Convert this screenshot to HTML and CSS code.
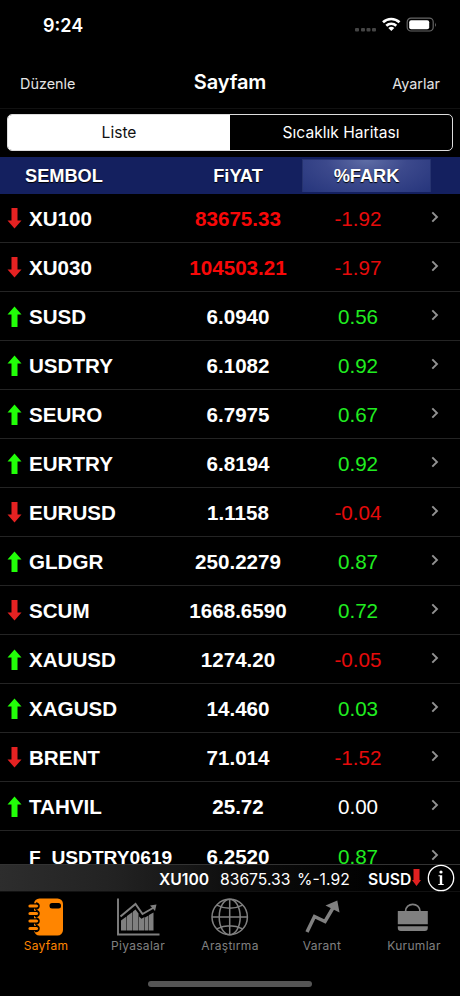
FILE: index.html
```html
<!DOCTYPE html>
<html lang="tr">
<head>
<meta charset="utf-8">
<title>Sayfam</title>
<link rel="stylesheet" href="styles.css">
</head>
<body>
<svg class="defs" aria-hidden="true">
  <symbol id="arrow" viewBox="0 0 14 21"><path d="M4 0h6v12.500h4L7 20.500 0 12.500h4z"/></symbol>
  <symbol id="chevron" viewBox="0 0 8 12"><path d="M1.300 1.300 6 6l-4.700 4.700" fill="none" stroke="#929292" stroke-width="1.900"/></symbol>
</svg>
<div class="phone">
  <header class="status">
    <span class="clock">9:24</span>
    <svg class="status-icons" width="84" height="18" viewBox="0 0 84 18">
      <g fill="#454545"><rect x="1" y="12" width="4" height="3.500" rx="1"/><rect x="7" y="12" width="4" height="3.500" rx="1"/><rect x="12.500" y="12" width="4" height="3.500" rx="1"/><rect x="18" y="12" width="4" height="3.500" rx="1"/></g>
      <g fill="none" stroke="#fff" stroke-width="2.600"><path d="M29 6.300a12 12 0 0 1 16.500 0"/><path d="M32.300 9.800a7.200 7.200 0 0 1 10 0"/></g>
      <path fill="#fff" d="M34.300 12.100a4.300 4.300 0 0 1 6 0l-3 3z"/>
      <rect x="53.200" y="2.200" width="26" height="12.800" rx="3.700" fill="none" stroke="#666" stroke-width="1.200"/>
      <rect x="55.200" y="4.200" width="20" height="9" rx="2" fill="#fff"/>
      <path d="M81 6.500q1.600 2.200 0 4.400z" fill="#777"/>
    </svg>
  </header>
  <nav class="navbar"><span class="nav-left">Düzenle</span><h1>Sayfam</h1><span class="nav-right">Ayarlar</span></nav>
  <div class="segment-wrap"><div class="segment"><span class="active">Liste</span><span>Sıcaklık Haritası</span></div></div>
  <div class="columns"><span class="col-symbol">SEMBOL</span><span class="col-price">FiYAT</span><span class="col-change">%FARK</span></div>
  <main class="rows">
    <div class="row down"><svg class="arrow"><use href="#arrow"/></svg><b class="symbol">XU100</b><b class="price red">83675.33</b><span class="change red">-1.92</span><svg class="chevron"><use href="#chevron"/></svg></div>
    <div class="row down"><svg class="arrow"><use href="#arrow"/></svg><b class="symbol">XU030</b><b class="price red">104503.21</b><span class="change red">-1.97</span><svg class="chevron"><use href="#chevron"/></svg></div>
    <div class="row up"><svg class="arrow"><use href="#arrow"/></svg><b class="symbol">SUSD</b><b class="price">6.0940</b><span class="change green">0.56</span><svg class="chevron"><use href="#chevron"/></svg></div>
    <div class="row up"><svg class="arrow"><use href="#arrow"/></svg><b class="symbol">USDTRY</b><b class="price">6.1082</b><span class="change green">0.92</span><svg class="chevron"><use href="#chevron"/></svg></div>
    <div class="row up"><svg class="arrow"><use href="#arrow"/></svg><b class="symbol">SEURO</b><b class="price">6.7975</b><span class="change green">0.67</span><svg class="chevron"><use href="#chevron"/></svg></div>
    <div class="row up"><svg class="arrow"><use href="#arrow"/></svg><b class="symbol">EURTRY</b><b class="price">6.8194</b><span class="change green">0.92</span><svg class="chevron"><use href="#chevron"/></svg></div>
    <div class="row down"><svg class="arrow"><use href="#arrow"/></svg><b class="symbol">EURUSD</b><b class="price">1.1158</b><span class="change red">-0.04</span><svg class="chevron"><use href="#chevron"/></svg></div>
    <div class="row up"><svg class="arrow"><use href="#arrow"/></svg><b class="symbol">GLDGR</b><b class="price">250.2279</b><span class="change green">0.87</span><svg class="chevron"><use href="#chevron"/></svg></div>
    <div class="row down"><svg class="arrow"><use href="#arrow"/></svg><b class="symbol">SCUM</b><b class="price">1668.6590</b><span class="change green">0.72</span><svg class="chevron"><use href="#chevron"/></svg></div>
    <div class="row up"><svg class="arrow"><use href="#arrow"/></svg><b class="symbol">XAUUSD</b><b class="price">1274.20</b><span class="change red">-0.05</span><svg class="chevron"><use href="#chevron"/></svg></div>
    <div class="row up"><svg class="arrow"><use href="#arrow"/></svg><b class="symbol">XAGUSD</b><b class="price">14.460</b><span class="change green">0.03</span><svg class="chevron"><use href="#chevron"/></svg></div>
    <div class="row down"><svg class="arrow"><use href="#arrow"/></svg><b class="symbol">BRENT</b><b class="price">71.014</b><span class="change red">-1.52</span><svg class="chevron"><use href="#chevron"/></svg></div>
    <div class="row up"><svg class="arrow"><use href="#arrow"/></svg><b class="symbol">TAHVIL</b><b class="price">25.72</b><span class="change">0.00</span><svg class="chevron"><use href="#chevron"/></svg></div>
    <div class="row"><span></span><b class="symbol long">F_USDTRY0619</b><b class="price">6.2520</b><span class="change green">0.87</span><svg class="chevron"><use href="#chevron"/></svg></div>
  </main>
  <div class="ticker">
    <b class="t-name">XU100</b><span class="t-value">83675.33</span><span class="t-percent">%-1.92</span><b class="t-next">SUSD</b>
    <svg class="t-arrow" width="9" height="18" viewBox="0 0 9 18"><path fill="#e02020" d="M1.500 0h6v11H9l-4.500 6L0 11h1.500z"/></svg>
    <svg class="info" width="28" height="28" viewBox="0 0 28 28"><circle cx="14" cy="14" r="12.700" fill="#000" stroke="#fff" stroke-width="1.300"/><circle cx="14" cy="8" r="1.600" fill="#fff"/><path fill="#fff" d="M11.500 11.300h3.700v8.700h1.500V21h-5.400v-1h1.500v-7.700h-1.300z"/></svg>
  </div>
  <nav class="tabs">
    <div class="tab selected">
      <svg width="44" height="40" viewBox="0 0 44 40"><rect x="10" y="1.500" width="29" height="37" rx="5.500" fill="#ff8500"/><rect x="25.500" y="6" width="11.500" height="5.500" rx="2.500" fill="#000"/><g fill="none" stroke="#000" stroke-width="5.500" stroke-linecap="round"><path d="M8 9h4M8 16.500h4M8 24h4M8 31.500h4"/></g><g fill="none" stroke="#ff8500" stroke-width="3.200" stroke-linecap="round"><path d="M6 9h6.500M6 16.500h6.500M6 24h6.500M6 31.500h6.500"/></g><g fill="none" stroke="#000" stroke-width="1.400"><path d="M12 6q3.500.5 3 3.500t-4 2.500M12 13.500q3.500.5 3 3.500t-4 2.500M12 21q3.500.5 3 3.500t-4 2.500M12 28.500q3.500.5 3 3.500t-4 2.500"/></g></svg>
      <span>Sayfam</span>
    </div>
    <div class="tab">
      <svg width="44" height="40" viewBox="0 0 44 40"><path d="M2 1.500v36h41.500" fill="none" stroke="#808080" stroke-width="1.900"/><path fill="#808080" d="M5 23.500l5.500-4v14H5zM11 19l5.500-4v18.500H11zM17 14.500l2.500-2 3 4v17H17zM23 19.500l2.500 2.200 3-1.700v13.500H23zM29 20.500l3.500-2v15H29zM33 18l4.500-2.500v18H33z"/><path d="M4.500 19.500 19.500 7l7 10L37 11" fill="none" stroke="#808080" stroke-width="2"/><path fill="#808080" d="M34 8.500l6.500-1-1.500 6.500z"/></svg>
      <span>Piyasalar</span>
    </div>
    <div class="tab">
      <svg width="44" height="40" viewBox="0 0 44 40"><g fill="none" stroke="#808080" stroke-width="1.500"><circle cx="21.700" cy="20" r="17.700"/><ellipse cx="21.700" cy="20" rx="10.500" ry="17.700"/><path d="M21.700 2.300v35.400M4 20h35.400M8.700 8.200q13 6.300 26 0M8.700 31.800q13-6.300 26 0"/></g></svg>
      <span>Araştırma</span>
    </div>
    <div class="tab">
      <svg width="44" height="40" viewBox="0 0 44 40"><path d="M7 35 14.500 19.500 25 24.500 33.500 10" fill="none" stroke="#808080" stroke-width="3.500"/><path fill="#808080" d="M25.500 8.500 37.300 3.500 39.500 15.500z"/></svg>
      <span>Varant</span>
    </div>
    <div class="tab">
      <svg width="44" height="40" viewBox="0 0 44 40"><path d="M13.500 14.500c0-9.500 14.500-9.500 14.500 0" fill="none" stroke="#808080" stroke-width="1.700"/><path fill="#808080" d="M5.800 14h30v13.200h-30zM5.800 29.200h30V31q0 3-3 3h-24q-3 0-3-3z"/></svg>
      <span>Kurumlar</span>
    </div>
  </nav>
  <div class="home"></div>
</div>
</body>
</html>
```
FILE: styles.css
```css
* { box-sizing: border-box; }
body { margin: 0; background: #000; }
.defs { display: none; }
.phone { width: 460px; height: 996px; display: flex; flex-direction: column; overflow: hidden; background: #000; color: #fff; font-family: Inter, "Liberation Sans", sans-serif; }
.status { height: 58px; flex: none; display: flex; justify-content: space-between; padding: 16px 22px 0 43px; }
.clock { font-size: 18px; line-height: 19px; font-weight: 600; }
.navbar { height: 51px; flex: none; display: grid; grid-template-columns: 1fr auto 1fr; align-items: center; padding: 0 20px; border-bottom: 1px solid #111; font-size: 14.4px; color: #e4e4e4; }
.navbar h1 { margin: 0; font-size: 20px; line-height: 24px; font-weight: 600; letter-spacing: -.1px; color: #fff; padding-bottom: 3px; }
.nav-right { text-align: right; }
.segment-wrap { height: 48px; flex: none; padding: 5px 7px 6px; }
.segment { display: flex; height: 37px; border: 1px solid #ddd; border-radius: 5px; overflow: hidden; font-size: 15.6px; }
.segment span { flex: 1; display: flex; align-items: center; justify-content: center; }
.segment .active { background: #fff; color: #111; }
.columns { height: 37px; flex: none; display: grid; grid-template-columns: 174px 128px 129px; align-items: center; background: #14205f; font: bold 18.2px/36px "Liberation Sans", sans-serif; text-shadow: 0 1px 1px #000; }
.col-symbol { padding-left: 25px; }
.col-price { text-align: center; }
.col-change { height: 33px; line-height: 32px; text-align: center; border: 1px solid #26336f; border-width: 1px 1px 0; background: radial-gradient(ellipse at 50% 0, #5e6da5 0%, #3c498c 45%, #26357c 100%); }
.rows { height: 670px; flex: none; overflow: hidden; font-family: "Liberation Sans", sans-serif; font-size: 20.6px; }
.row { display: grid; grid-template-columns: 22px 146px 126px 114px 8px; height: 49px; padding-left: 7px; align-items: center; border-bottom: 1px solid #242424; line-height: 46px; }
.row b, .row .change { padding-top: 2px; }
.row .price, .row .change { text-align: center; }
.row .symbol { white-space: nowrap; }
.row .symbol.long { font-size: 19.2px; padding-top: 4px; }
.arrow { width: 15px; height: 21px; }
.down .arrow { fill: #e52222; }
.up .arrow { fill: #22ff08; transform: rotate(180deg); }
.chevron { width: 8px; height: 12px; margin: 0 0 3px 16px; }
.red { color: #f80808; }
.change.red { color: #e60b0b; }
.green { color: #20ed20; }
.ticker { height: 28px; flex: none; display: flex; align-items: center; padding-left: 159px; border-top: 1px solid #333; border-bottom: 1px solid #111; background: linear-gradient(90deg, #2d2d2d, #222 25%, #0b0b0b 55%, #000 85%); font-size: 15.7px; white-space: nowrap; }
.ticker b, .ticker span { padding-top: 2px; }
.ticker b { font-weight: 600; }
.t-name { width: 61px; }
.t-value { width: 77px; }
.t-percent { width: 71px; }
.t-next { width: 44px; }
.t-arrow { margin: -1px 6px 0 0; }
.info { flex: none; }
.tabs { height: 89px; flex: none; display: grid; grid-template-columns: repeat(5, 1fr); padding-top: 5px; color: #808080; }
.tab { display: flex; flex-direction: column; align-items: center; font-size: 12px; line-height: 18px; letter-spacing: .3px; }
.tab svg { flex: none; }
.selected { color: #ff8500; }
.home { width: 164px; height: 6px; flex: none; align-self: center; border-radius: 3px; background: #555; }
```
